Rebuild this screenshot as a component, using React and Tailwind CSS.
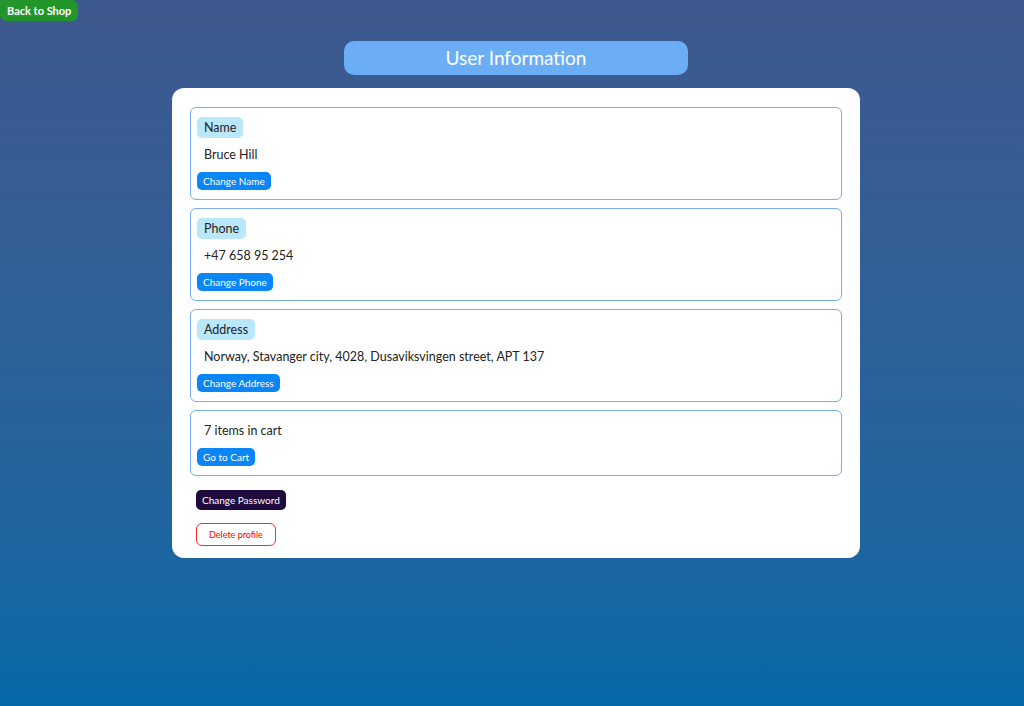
export default function App() {
  const fields = [
    { label: "Name", value: "Bruce Hill", action: "Change Name" },
    { label: "Phone", value: "+47 658 95 254", action: "Change Phone" },
    {
      label: "Address",
      value: "Norway, Stavanger city, 4028, Dusaviksvingen street, APT 137",
      action: "Change Address",
    },
  ];

  return (
    <div
      className="min-h-[706px] bg-gradient-to-b from-[#3e598e] to-[#0369a6] text-[#222]"
      style={{ fontFamily: "Lato, 'Noto Sans', sans-serif" }}
    >
      <button className="block h-[21px] px-[7px] rounded-br-[6px] rounded-tr-[6px] rounded-bl-[6px] bg-[#22952b] text-white text-[11px] font-bold leading-[21px]">
        Back to Shop
      </button>

      <div className="pl-[8px]">
        <div className="flex justify-center mt-[20px]">
          <div className="w-[344px] h-[34px] rounded-[10px] bg-[#6caef6] text-white text-[19px] leading-[34px] text-center">
            User Information
          </div>
        </div>

        <div className="mx-auto mt-[13px] w-[688px] bg-white rounded-[12px] px-[18px] pt-[19px] pb-[12px]">
          <div className="flex flex-col gap-[8px]">
            {fields.map((f) => (
              <div
                key={f.label}
                className="flex flex-col items-start py-[9px] px-[6px] border border-[#76aef0] rounded-[6px]"
              >
                <span className="h-[21px] px-[7px] rounded-[5px] bg-[#b9e7fb] text-[12.5px] leading-[21px]">
                  {f.label}
                </span>
                <span className="mt-[7px] h-[20px] px-[7px] text-[12.5px] leading-[20px]">
                  {f.value}
                </span>
                <button className="mt-[7px] h-[18px] px-[6px] rounded-[5px] bg-[#0a86f7] text-white text-[10px] leading-[18px]">
                  {f.action}
                </button>
              </div>
            ))}
            <div className="flex flex-col items-start py-[9px] px-[6px] border border-[#76aef0] rounded-[6px]">
              <span className="mt-[1px] h-[20px] px-[7px] text-[12.5px] leading-[20px]">
                7 items in cart
              </span>
              <button className="mt-[7px] h-[18px] px-[6px] rounded-[5px] bg-[#0a86f7] text-white text-[10px] leading-[18px]">
                Go to Cart
              </button>
            </div>
          </div>

          <div className="flex flex-col items-start pl-[6px]">
            <button className="mt-[14px] h-[20px] px-[6px] rounded-[5px] bg-[#1f0a3d] text-white text-[10px] leading-[20px]">
              Change Password
            </button>
            <button className="mt-[13px] h-[23px] px-[12px] rounded-[6px] bg-white border border-[#ff2b2b] text-[#f00] text-[9px] leading-[21px]">
              Delete profile
            </button>
          </div>
        </div>
      </div>
    </div>
  );
}
